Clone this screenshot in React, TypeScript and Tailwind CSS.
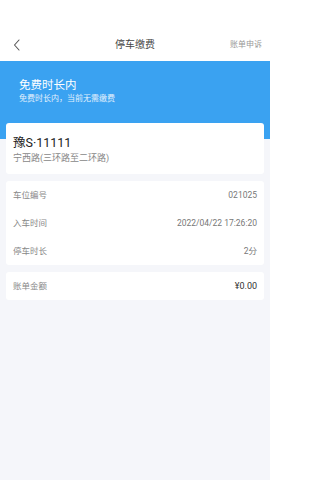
import React from 'react';

const font = { fontFamily: 'Roboto, "Noto Sans CJK SC", sans-serif' };

const App = () => {
  const rows = [
    { label: '车位编号', value: '021025' },
    { label: '入车时间', value: '2022/04/22 17:26:20' },
    { label: '停车时长', value: '2分' },
  ];

  return (
    <div className="w-[270px] h-[480px] bg-[#f5f6fa] overflow-hidden" style={font}>
      {/* Status bar + nav */}
      <div className="bg-white">
        <div className="h-[28px]" />
        <div className="relative h-[33px] flex items-center justify-center">
          <svg className="absolute left-[12px] top-[11px]" width="10" height="12" viewBox="0 0 10 12" fill="none">
            <path d="M7 1 L2.5 6 L7 11" stroke="#555" strokeWidth="1.1" strokeLinecap="round" strokeLinejoin="round" />
          </svg>
          <span className="text-[10px] text-[#444] leading-none">停车缴费</span>
          <span className="absolute right-[8px] text-[8px] text-[#999] leading-none">账单申诉</span>
        </div>
      </div>

      {/* Banner */}
      <div className="bg-[#3aa2f1] h-[78px] px-[19px] pt-[17px]">
        <div className="text-[11.5px] leading-[15px] text-white">免费时长内</div>
        <div className="text-[8px] leading-[11px] text-[#e3f1fd]">免费时长内，当前无需缴费</div>
      </div>

      {/* Plate card */}
      <div className="relative mx-[6px] -mt-[16px] bg-white rounded-[3px] px-[7px] pt-[12px] pb-[10px]">
        <div className="text-[12.5px] leading-[16px] text-[#222]">豫S·11111</div>
        <div className="text-[9px] leading-[12px] text-[#888] mt-[1px]">宁西路(三环路至二环路)</div>
      </div>

      {/* Details card */}
      <div className="mx-[6px] mt-[7px] bg-white rounded-[3px] px-[7px]">
        {rows.map((r) => (
          <div key={r.label} className="h-[28px] flex items-center justify-between text-[8.5px] leading-none">
            <span className="text-[#888]">{r.label}</span>
            <span className="text-[#777]">{r.value}</span>
          </div>
        ))}
      </div>

      {/* Amount card */}
      <div className="mx-[6px] mt-[7px] bg-white rounded-[3px] px-[7px] h-[28px] flex items-center justify-between text-[8.5px] leading-none">
        <span className="text-[#888]">账单金额</span>
        <span className="text-[#333] text-[9px]">¥0.00</span>
      </div>
    </div>
  );
};

export default App;
